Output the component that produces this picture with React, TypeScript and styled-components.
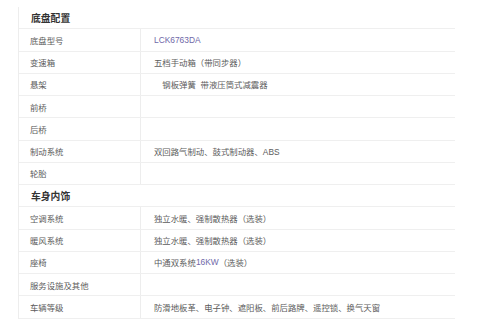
import React from "react";
import styled, { createGlobalStyle } from "styled-components";

const Global = createGlobalStyle`
  html, body { margin: 0; padding: 0; background: #fff; }
  body {
    width: 480px;
    height: 320px;
    overflow: hidden;
    font-family: "Liberation Sans", "Microsoft YaHei", "Noto Sans CJK SC", sans-serif;
  }
`;

const Page = styled.div`
  padding: 7px 0 0 18px;
`;

const Table = styled.div`
  width: 436px;
  border-left: 1px solid #ededed;
  display: flex;
  flex-direction: column;
`;

const SectionTitle = styled.div`
  height: 22.25px;
  box-sizing: border-box;
  border-bottom: 1px solid #efefef;
  display: flex;
  align-items: center;
  padding-left: 12px;
  font-size: 9.8px;
  font-weight: bold;
  color: #333;
`;

const Row = styled.div`
  height: 22.25px;
  box-sizing: border-box;
  border-bottom: 1px solid #efefef;
  display: grid;
  grid-template-columns: 122px 1fr;
`;

const Label = styled.div`
  box-sizing: border-box;
  border-right: 1px solid #ededed;
  display: flex;
  align-items: center;
  padding-left: 11px;
  font-size: 8.4px;
  color: #5c5c5c;
  white-space: nowrap;
`;

const Value = styled.div`
  display: flex;
  align-items: center;
  padding-left: 13px;
  font-size: 8.4px;
  color: #5c5c5c;
  white-space: pre;
`;

const Code = styled.span`
  color: #6f68a8;
`;

type Item = { label: string; value?: React.ReactNode };
type Section = { title: string; items: Item[] };

const sections: Section[] = [
  {
    title: "底盘配置",
    items: [
      { label: "底盘型号", value: <Code>LCK6763DA</Code> },
      { label: "变速箱", value: "五档手动箱（带同步器）" },
      { label: "悬架", value: "　钢板弹簧  带液压筒式减震器" },
      { label: "前桥" },
      { label: "后桥" },
      { label: "制动系统", value: "双回路气制动、鼓式制动器、ABS" },
      { label: "轮胎" },
    ],
  },
  {
    title: "车身内饰",
    items: [
      { label: "空调系统", value: "独立水暖、强制散热器（选装）" },
      { label: "暖风系统", value: "独立水暖、强制散热器（选装）" },
      {
        label: "座椅",
        value: (
          <>
            中通双系统<Code>16KW</Code>（选装）
          </>
        ),
      },
      { label: "服务设施及其他" },
      { label: "车辆等级", value: "防滑地板革、电子钟、遮阳板、前后路牌、遥控锁、换气天窗" },
    ],
  },
];

export default function App() {
  return (
    <Page>
      <Global />
      <Table>
        {sections.map((s) => (
          <React.Fragment key={s.title}>
            <SectionTitle>{s.title}</SectionTitle>
            {s.items.map((it) => (
              <Row key={it.label}>
                <Label>{it.label}</Label>
                <Value>{it.value}</Value>
              </Row>
            ))}
          </React.Fragment>
        ))}
      </Table>
    </Page>
  );
}
